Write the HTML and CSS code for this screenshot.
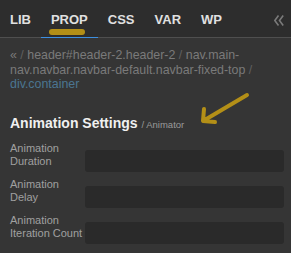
FILE: index.html
```html
<!DOCTYPE html>
<html lang="en">
<head>
    <meta charset="UTF-8">
    <title>Properties</title>
    <link rel="stylesheet" href="styles.css">
</head>
<body>
    <div class="panel">
        <div class="tabs">
            <a class="tab">LIB</a>
            <a class="tab active">PROP</a>
            <a class="tab">CSS</a>
            <a class="tab">VAR</a>
            <a class="tab">WP</a>
            <svg class="collapse" width="10" height="11" viewBox="0 0 10 11">
                <path d="M4.5 0.5 L0.8 5.5 L4.5 10.5 M9.2 0.5 L5.5 5.5 L9.2 10.5" fill="none" stroke="#7a7a7a" stroke-width="1.6"/>
            </svg>
        </div>

        <div class="crumbs">
            <span class="crumb">&laquo;</span> <span class="sep">/</span>
            <span class="crumb">header#header-2.header-2</span> <span class="sep">/</span>
            <span class="crumb">nav.main-nav.navbar.navbar-default.navbar-fixed-top</span> <span class="sep">/</span>
            <span class="crumb current">div.container</span>
        </div>

        <div class="section">
            <h3>Animation Settings <small>/ Animator</small></h3>

            <div class="row">
                <label>Animation Duration</label>
                <input type="text">
            </div>
            <div class="row">
                <label>Animation Delay</label>
                <input type="text">
            </div>
            <div class="row">
                <label>Animation Iteration Count</label>
                <input type="text">
            </div>
        </div>

        <!-- hand-drawn annotations -->
        <span class="mark"></span>
        <svg class="arrow" width="60" height="40" viewBox="0 0 60 40">
            <path d="M49 6 L5 32 M6 20 L5 32 L17 33" fill="none" stroke="#b38f17" stroke-width="4" stroke-linecap="round" stroke-linejoin="round"/>
        </svg>
    </div>
</body>
</html>
```

FILE: styles.css
```css
body {
    margin: 0;
    background-color: #353535;
    font-family: "Liberation Sans", Arial, sans-serif;
}

.panel {
    position: relative;
    height: 253px;
    background-color: #353535;
}

.tabs {
    display: flex;
    align-items: stretch;
    height: 37px;
    background-color: #2d2d2d;
    border-bottom: 1px solid #4f4f4f;
}

.tab {
    display: flex;
    align-items: center;
    padding: 1px 10px 0;
    font-size: 13px;
    font-weight: bold;
    color: #e0e0e0;
    border-bottom: 1px solid transparent;
    margin-bottom: -1px;
}

.tab.active {
    border-bottom-color: #3d8fe0;
}

.collapse {
    margin-left: auto;
    margin-right: 7px;
    margin-top: 15px;
}

.crumbs {
    padding: 10px 10px 0;
    font-size: 12.4px;
    line-height: 14.5px;
    color: #7a7a7a;
}

.crumbs .sep {
    color: #606060;
}

.crumbs .current {
    color: #4b7591;
}

.section {
    padding: 22px 7px 0 10px;
}

.section h3 {
    margin: 0 0 8px;
    font-size: 14px;
    font-weight: bold;
    color: #f0f0f0;
    line-height: 18px;
}

.section h3 small {
    font-size: 9.5px;
    font-weight: normal;
    color: #9a9a9a;
}

.row {
    display: flex;
    align-items: flex-start;
    height: 36px;
}

.row label {
    width: 75px;
    font-size: 11px;
    line-height: 13px;
    color: #a0a0a0;
}

.row input {
    flex: 1;
    height: 22px;
    margin-top: 8px;
    box-sizing: border-box;
    border: none;
    border-radius: 3px;
    background-color: #2a2a2a;
    outline: none;
}

.mark {
    position: absolute;
    left: 49px;
    top: 29px;
    width: 36px;
    height: 6px;
    border-radius: 3px;
    background-color: #b38f17;
}

.arrow {
    position: absolute;
    left: 198px;
    top: 89px;
}
```
